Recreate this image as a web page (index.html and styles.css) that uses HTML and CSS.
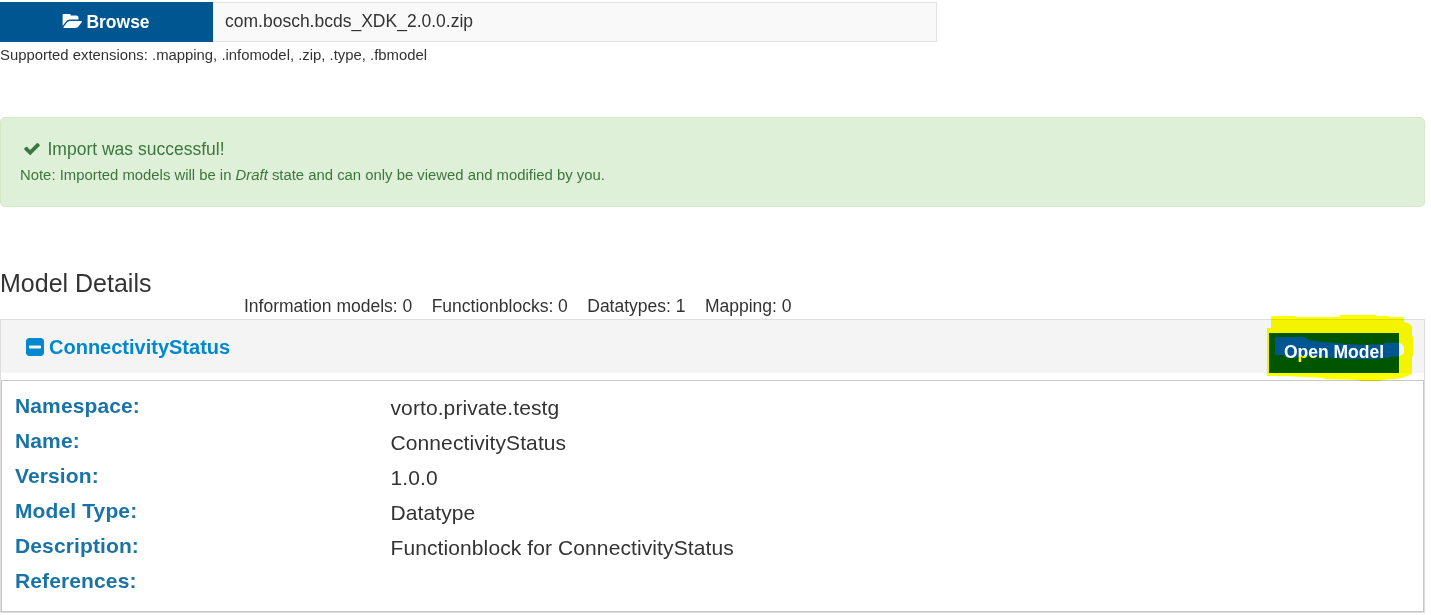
FILE: index.html
```html
<!DOCTYPE html>
<html lang="en">
<head>
<meta charset="utf-8">
<title>Import Models</title>
<link rel="stylesheet" href="styles.css">
</head>
<body>
<main class="page">
  <div class="upload">
    <button class="btn browse" type="button">
      <svg class="icon-folder" viewBox="0 256 1943 1280" preserveAspectRatio="none"><path d="M1943 952q0 31-31 66l-336 396q-43 51-120.500 86.500t-143.500 35.500h-1088q-34 0-60.500-13t-26.500-43q0-31 31-66l336-396q43-51 120.500-86.500t143.500-35.500h1088q34 0 60.500 13t26.500 43zm-343-344v160h-832q-94 0-197 47.500t-164 119.500l-337 396-5 6q0-4-.5-12.500t-.5-12.500v-960q0-92 66-158t158-66h320q92 0 158 66t66 158v32h544q92 0 158 66t66 158z"/></svg>
      <span>Browse</span>
    </button>
    <div class="filename">com.bosch.bcds_XDK_2.0.0.zip</div>
  </div>
  <p class="hint">Supported extensions: .mapping, .infomodel, .zip, .type, .fbmodel</p>

  <section class="alert">
    <div class="alert-title">
      <svg class="icon-check" viewBox="121 334 1550 1188"><path d="M1671 566q0 40-28 68l-724 724-136 136q-28 28-68 28t-68-28l-136-136-362-362q-28-28-28-68t28-68l136-136q28-28 68-28t68 28l294 295 656-657q28-28 68-28t68 28l136 136q28 28 28 68z"/></svg>
      <span>Import was successful!</span>
    </div>
    <p class="alert-note">Note: Imported models will be in <em>Draft</em> state and can only be viewed and modified by you.</p>
  </section>

  <h1 class="title">Model Details</h1>
  <div class="counts">
    <span>Information models: 0</span>
    <span>Functionblocks: 0</span>
    <span>Datatypes: 1</span>
    <span>Mapping: 0</span>
  </div>

  <section class="panel">
    <header class="panel-head">
      <a class="model-link">
        <svg class="icon-minus" viewBox="128 128 1536 1536"><path d="M1408 960v-128q0-26-19-45t-45-19H448q-26 0-45 19t-19 45v128q0 26 19 45t45 19h896q26 0 45-19t19-45zm256-544v960q0 119-84.500 203.500T1376 1664H416q-119 0-203.500-84.500T128 1376V416q0-119 84.500-203.500T416 128h960q119 0 203.500 84.500T1664 416z"/></svg>
        <span>ConnectivityStatus</span>
      </a>
      <div class="open-wrap">
        <button class="btn open" type="button">Open Model</button>
        <svg class="marker" viewBox="1267 315 146 66"><path fill-rule="evenodd" d="M1271 316H1295V317H1339V315H1376V316H1389V317H1404V322L1408 323L1412 326V336L1413 337V356L1412 357V374L1407 376L1402 378L1394 379L1381 380V381H1359V380L1324 379V378L1304 377L1287 376H1267V328H1271ZM1275 337H1304L1309 340L1322 342L1334 343L1361 345L1384 344V343H1399L1402 344L1404 347V353L1402 355L1399 356L1389 357V358L1376 359H1350L1334 358L1322 357H1312L1309 356H1299L1297 358H1286L1284 355H1275Z"/></svg>
      </div>
    </header>
    <dl class="details">
      <dt>Namespace:</dt><dd>vorto.private.testg</dd>
      <dt>Name:</dt><dd>ConnectivityStatus</dd>
      <dt>Version:</dt><dd>1.0.0</dd>
      <dt>Model Type:</dt><dd>Datatype</dd>
      <dt>Description:</dt><dd>Functionblock for ConnectivityStatus</dd>
      <dt>References:</dt><dd></dd>
    </dl>
  </section>
</main>
</body>
</html>
```
FILE: styles.css
```css
* { box-sizing: border-box; }
body {
  margin: 0;
  background: #fff;
  color: #333;
  font-family: "Liberation Sans", Arial, sans-serif;
  font-size: 17.5px;
  overflow: hidden;
}
p, h1, dl, dd { margin: 0; }
svg { display: block; flex: none; fill: currentColor; }
.page { width: 1425px; padding-top: 2px; }
.btn {
  border: 0;
  padding: 0;
  background: #005691;
  color: #fff;
  font: bold 17.5px "Liberation Sans", Arial, sans-serif;
}
.upload { display: flex; width: 937px; height: 40px; }
.browse {
  display: flex;
  align-items: center;
  justify-content: center;
  gap: 4px;
  width: 213px;
}
.icon-folder { width: 20px; height: 14px; margin: -2px 0 0 -1px; }
.filename {
  flex: 1;
  padding-left: 12px;
  border: 1px solid #e1e1e1;
  border-left: 0;
  background: #f9f9f9;
  line-height: 37px;
}
.hint { height: 75px; font-size: 14.86px; line-height: 26px; }
.alert {
  height: 90px;
  padding: 19px;
  border: 1px solid #d6e9c6;
  border-radius: 5px;
  background: #dff0d8;
  color: #3c763d;
}
.alert-title {
  display: flex;
  align-items: center;
  gap: 8px;
  height: 25px;
  padding-left: 3.500px;
}
.icon-check { width: 16px; height: 12px; margin-top: -2px; }
.alert-note { font-size: 14.86px; line-height: 26px; }
.title {
  margin-top: 62px;
  font-size: 25px;
  font-weight: normal;
  line-height: 28px;
}
.counts {
  display: flex;
  gap: 19.400px;
  height: 22px;
  padding-left: 244px;
  line-height: 18px;
}
.panel { border: 1px solid #ddd; }
.panel-head {
  display: flex;
  justify-content: space-between;
  height: 53px;
  padding: 13px 25px 0;
  background: #f4f4f4;
}
.model-link {
  display: flex;
  align-items: center;
  gap: 5px;
  height: 28px;
  color: #008ecf;
  color: #0088cf;
  font-size: 20px;
  font-weight: bold;
}
.icon-minus { width: 18px; height: 18px; }
.open-wrap { position: relative; width: 130px; height: 40px; }
.open { width: 130px; height: 40px; padding-bottom: 2px; }
.marker {
  position: absolute;
  top: -18px;
  left: -2px;
  width: 146px;
  height: 66px;
  fill: #ff0;
  mix-blend-mode: multiply;
}
.details {
  display: grid;
  grid-template-columns: 375.500px 1fr;
  grid-auto-rows: 35px;
  height: 232px;
  margin-top: 7px;
  padding: 8px 13px;
  border: 1px solid #c8c8c8;
  font-size: 21px;
  letter-spacing: .1px;
}
.details dt { color: #1a73a7; font-weight: bold; line-height: 33px; letter-spacing: .12px; }
.details dd { line-height: 38px; }
```
